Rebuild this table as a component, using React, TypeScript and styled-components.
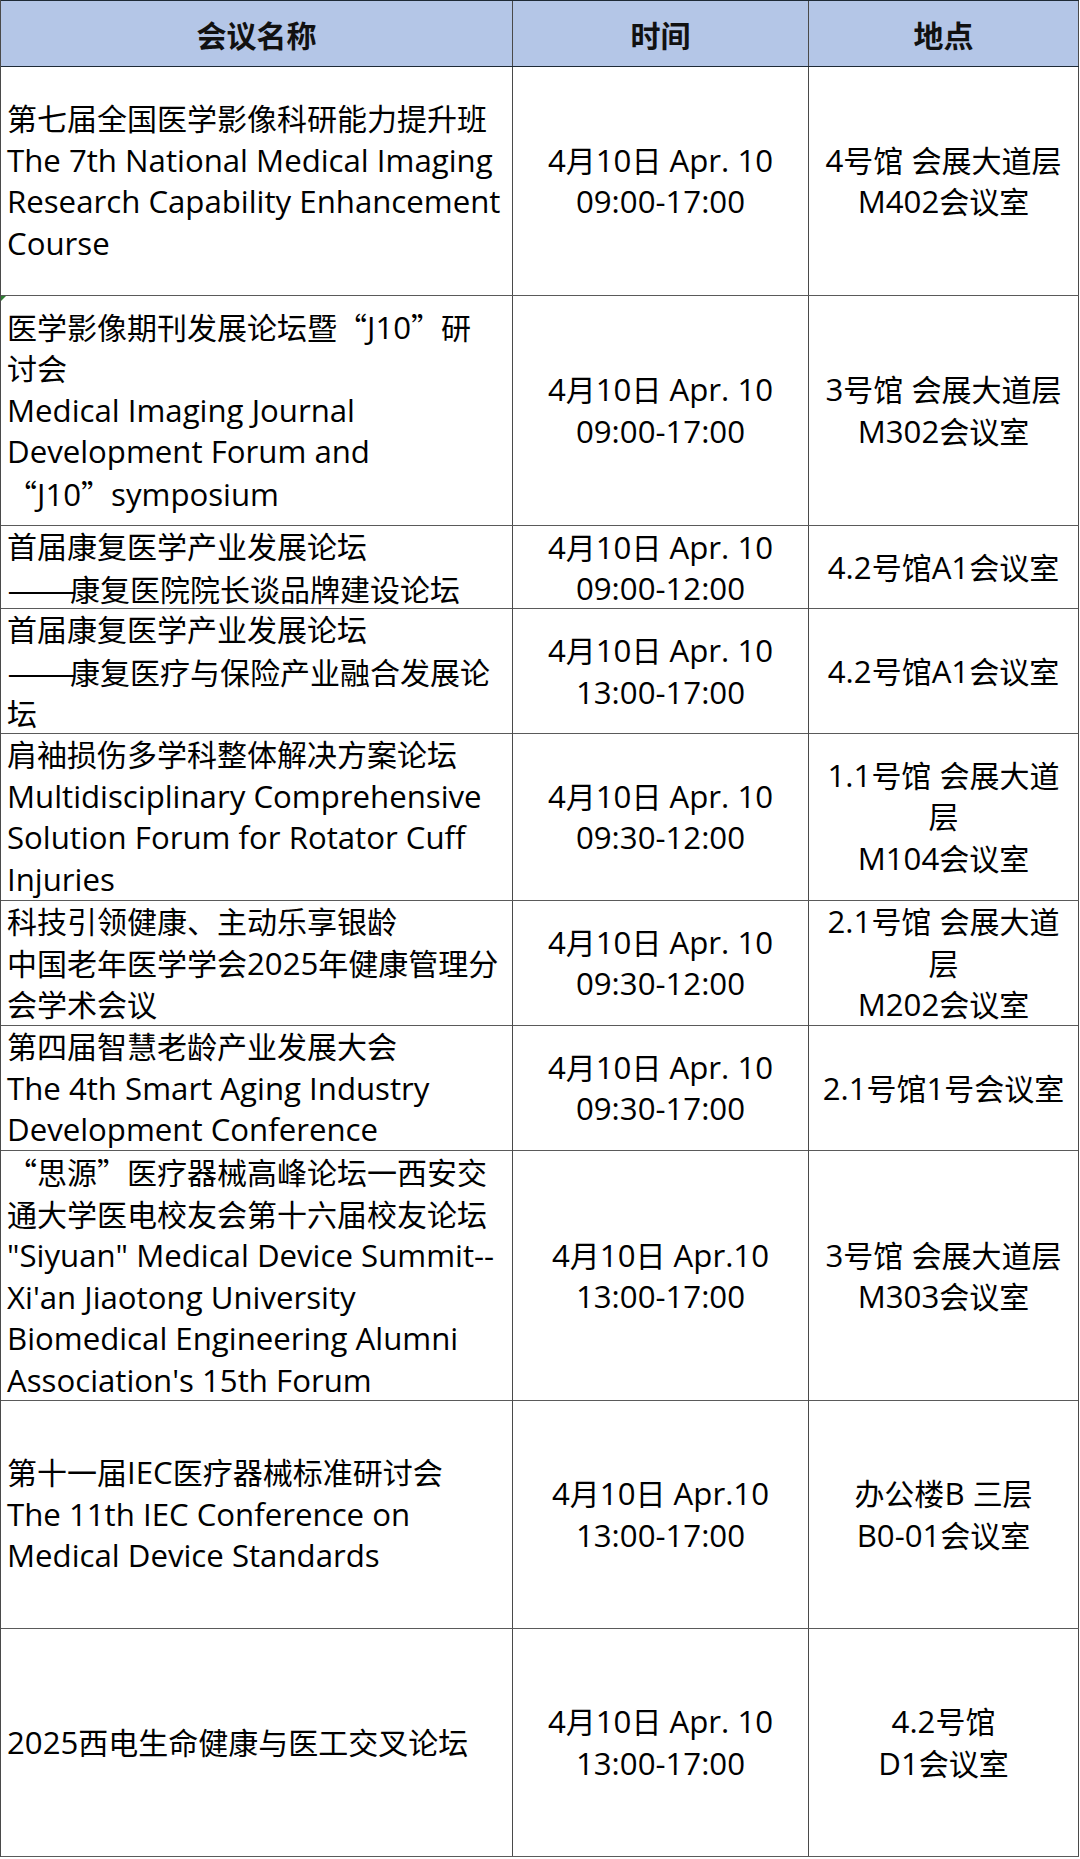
import React from "react";
import styled, { createGlobalStyle } from "styled-components";

const Global = createGlobalStyle`
  html, body { margin: 0; padding: 0; background: #ffffff; }
  body { font-family: "Open Sans", "Noto Sans CJK SC", sans-serif; color: #000; }
`;

const Table = styled.div`
  width: 1078px;
  display: flex;
  flex-direction: column;
  border-left: 1px solid #4a4a4a;
`;

const Row = styled.div<{ $h: number; $head?: boolean }>`
  display: grid;
  grid-template-columns: 512px 296px 270px;
  height: ${(p) => p.$h}px;
  box-sizing: border-box;
  border-bottom: 1px solid ${(p) => (p.$head ? "#1e2a36" : "#5a5a5a")};
  border-top: ${(p) => (p.$head ? "1px solid #1e2a36" : "none")};
  background: ${(p) => (p.$head ? "#b4c6e7" : "#ffffff")};
`;

const Cell = styled.div<{ $align: "left" | "center"; $mark?: boolean }>`
  position: relative;
  display: flex;
  flex-direction: column;
  justify-content: center;
  align-items: ${(p) => (p.$align === "left" ? "flex-start" : "center")};
  text-align: ${(p) => p.$align};
  padding-left: ${(p) => (p.$align === "left" ? "6px" : "0")};
  border-right: 1px solid #4a4a4a;
  box-sizing: border-box;
  ${(p) =>
    p.$mark
      ? `&::before {
    content: "";
    position: absolute;
    left: 0;
    top: 0;
    width: 0;
    height: 0;
    border-top: 5px solid #2e7d32;
    border-right: 5px solid transparent;
  }`
      : ""}
`;

const HeadText = styled.div`
  font-family: "Noto Sans CJK SC", sans-serif;
  font-weight: 700;
  font-size: 30px;
  line-height: 40px;
  color: #111;
`;

const Line = styled.div`
  font-size: 30px;
  line-height: 41.5px;
  white-space: nowrap;
`;

const Latin = styled.span`
  font-family: "Open Sans", sans-serif;
  font-size: 31.2px;
`;

const OpenQ = styled.span`
  display: inline-block;
  width: 1em;
  text-align: right;
  font-family: "Noto Sans CJK SC", sans-serif;
`;

const CloseQ = styled.span`
  display: inline-block;
  width: 1em;
  text-align: left;
  font-family: "Noto Sans CJK SC", sans-serif;
`;

const Dash = styled.span`
  display: inline-block;
  width: 2.1em;
  font-family: "Noto Sans CJK SC", sans-serif;
  transform: scaleX(1.4);
  transform-origin: left center;
`;

const cjk = /[\u3000-\u303f\u4e00-\u9fff\uff00-\uffef]/;

function renderLine(s: string) {
  const parts: React.ReactNode[] = [];
  let buf = "";
  let bufLatin = false;
  let k = 0;
  const flush = () => {
    if (buf) {
      parts.push(bufLatin ? <Latin key={k++}>{buf}</Latin> : <span key={k++}>{buf}</span>);
      buf = "";
    }
  };
  const chars = Array.from(s);
  for (let i = 0; i < chars.length; i++) {
    const ch = chars[i];
    if (ch === "“") {
      flush();
      parts.push(<OpenQ key={k++}>“</OpenQ>);
    } else if (ch === "”") {
      flush();
      parts.push(<CloseQ key={k++}>”</CloseQ>);
    } else if (ch === "—") {
      flush();
      let run = "";
      while (i < chars.length && chars[i] === "—") {
        run += chars[i];
        i++;
      }
      i--;
      parts.push(<Dash key={k++}>{run}</Dash>);
    } else {
      const isLatin = !cjk.test(ch);
      if (buf && isLatin !== bufLatin) flush();
      bufLatin = isLatin;
      buf += ch;
    }
  }
  flush();
  return parts;
}

type Item = { h: number; name: string[]; time: string[]; loc: string[]; mark?: boolean };

const rows: Item[] = [
  {
    h: 229,
    name: ["第七届全国医学影像科研能力提升班", "The 7th National Medical Imaging", "Research Capability Enhancement", "Course"],
    time: ["4月10日 Apr. 10", "09:00-17:00"],
    loc: ["4号馆 会展大道层", "M402会议室"],
  },
  {
    h: 230,
    mark: true,
    name: ["医学影像期刊发展论坛暨“J10”研", "讨会", "Medical Imaging Journal", "Development Forum and", "“J10”symposium"],
    time: ["4月10日 Apr. 10", "09:00-17:00"],
    loc: ["3号馆 会展大道层", "M302会议室"],
  },
  {
    h: 83,
    name: ["首届康复医学产业发展论坛", "——康复医院院长谈品牌建设论坛"],
    time: ["4月10日 Apr. 10", "09:00-12:00"],
    loc: ["4.2号馆A1会议室"],
  },
  {
    h: 125,
    name: ["首届康复医学产业发展论坛", "——康复医疗与保险产业融合发展论", "坛"],
    time: ["4月10日 Apr. 10", "13:00-17:00"],
    loc: ["4.2号馆A1会议室"],
  },
  {
    h: 167,
    name: ["肩袖损伤多学科整体解决方案论坛", "Multidisciplinary Comprehensive", "Solution Forum for Rotator Cuff", "Injuries"],
    time: ["4月10日 Apr. 10", "09:30-12:00"],
    loc: ["1.1号馆 会展大道", "层", "M104会议室"],
  },
  {
    h: 125,
    name: ["科技引领健康、主动乐享银龄", "中国老年医学学会2025年健康管理分", "会学术会议"],
    time: ["4月10日 Apr. 10", "09:30-12:00"],
    loc: ["2.1号馆 会展大道", "层", "M202会议室"],
  },
  {
    h: 125,
    name: ["第四届智慧老龄产业发展大会", "The 4th Smart Aging Industry", "Development Conference"],
    time: ["4月10日 Apr. 10", "09:30-17:00"],
    loc: ["2.1号馆1号会议室"],
  },
  {
    h: 250,
    name: [
      "“思源”医疗器械高峰论坛一西安交",
      "通大学医电校友会第十六届校友论坛",
      "\"Siyuan\" Medical Device Summit--",
      "Xi'an Jiaotong University",
      "Biomedical Engineering Alumni",
      "Association's 15th Forum",
    ],
    time: ["4月10日 Apr.10", "13:00-17:00"],
    loc: ["3号馆 会展大道层", "M303会议室"],
  },
  {
    h: 228,
    name: ["第十一届IEC医疗器械标准研讨会", "The 11th IEC Conference on", "Medical Device Standards"],
    time: ["4月10日 Apr.10", "13:00-17:00"],
    loc: ["办公楼B 三层", "B0-01会议室"],
  },
  {
    h: 228,
    name: ["2025西电生命健康与医工交叉论坛"],
    time: ["4月10日 Apr. 10", "13:00-17:00"],
    loc: ["4.2号馆", "D1会议室"],
  },
];

function Lines({ items }: { items: string[] }) {
  return (
    <>
      {items.map((s, i) => (
        <Line key={i}>{renderLine(s)}</Line>
      ))}
    </>
  );
}

export default function App() {
  return (
    <>
      <Global />
      <Table>
        <Row $h={67} $head>
          <Cell $align="center">
            <HeadText>会议名称</HeadText>
          </Cell>
          <Cell $align="center">
            <HeadText>时间</HeadText>
          </Cell>
          <Cell $align="center">
            <HeadText>地点</HeadText>
          </Cell>
        </Row>
        {rows.map((r, i) => (
          <Row key={i} $h={r.h}>
            <Cell $align="left" $mark={r.mark}>
              <Lines items={r.name} />
            </Cell>
            <Cell $align="center">
              <Lines items={r.time} />
            </Cell>
            <Cell $align="center">
              <Lines items={r.loc} />
            </Cell>
          </Row>
        ))}
      </Table>
    </>
  );
}
